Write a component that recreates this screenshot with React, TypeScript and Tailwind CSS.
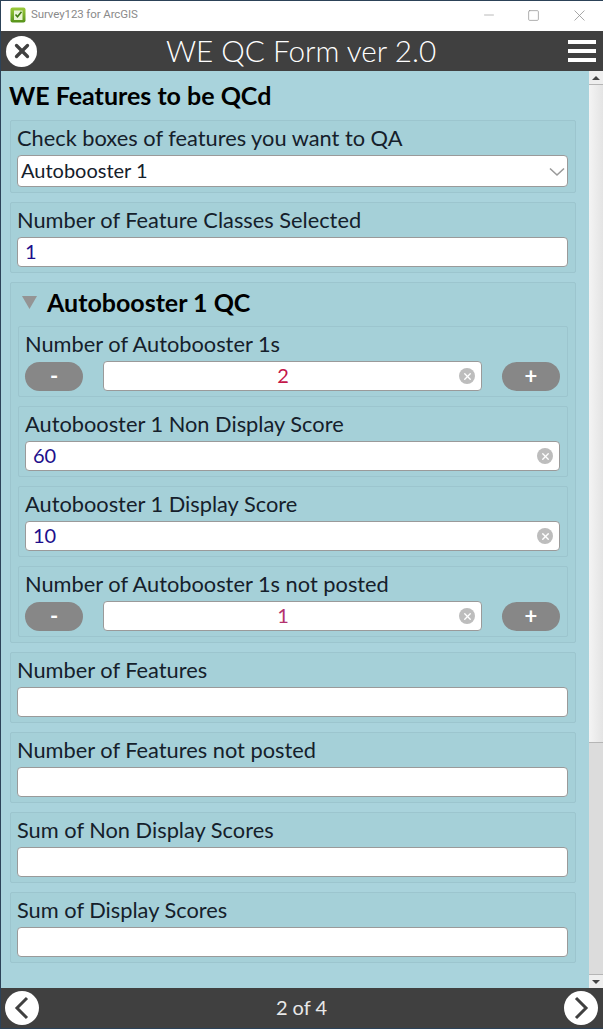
import React from 'react';
import { X, Minus, Square } from 'lucide-react';

const ClearIcon = () => (
  <span className="absolute right-[6px] top-1/2 -translate-y-1/2 flex h-4 w-4 items-center justify-center rounded-full bg-[#bdbdbd]">
    <X size={11} color="#ffffff" strokeWidth={3} />
  </span>
);

const TextBox = ({ value, color = 'text-[#1d0f8c]', center, clear }: { value?: string; color?: string; center?: boolean; clear?: boolean }) => (
  <div className={`relative flex h-[30px] min-w-0 shrink-0 grow items-center rounded-[4px] border border-[#9a9a9a] bg-white pl-[7px] pb-[3px] text-[20px] leading-none ${center ? 'justify-center pr-[26px]' : 'pr-[7px]'} ${color}`}>
    <span>{value}</span>
    {clear && <ClearIcon />}
  </div>
);

const Group = ({ label, children, tall }: { label: string; children: React.ReactNode; tall?: boolean }) => (
  <div className={`flex flex-col items-stretch rounded-[2px] border border-[#9cc5ce] bg-[#a5d0d8] pl-[6px] pr-[7px] ${tall ? 'h-[73px]' : 'h-[71px]'}`}>
    <div className="h-[34px] shrink-0 pt-[3px] text-[21.8px] leading-[28px] text-[#15202b]">{label}</div>
    <div className="flex">{children}</div>
  </div>
);

const PillButton = ({ text }: { text: string }) => (
  <div className="flex h-[29px] w-[58px] shrink-0 items-center justify-center rounded-full bg-[#878787] text-[22px] font-bold leading-none text-white">{text}</div>
);

const Stepper = ({ label, value, color }: { label: string; value: string; color: string }) => (
  <Group label={label}>
    <div className="flex w-full items-center gap-[20px]">
      <PillButton text="-" />
      <TextBox value={value} color={color} center clear />
      <PillButton text="+" />
    </div>
  </Group>
);

export default function App() {
  return (
    <div className="flex h-[1029px] w-[603px] flex-col overflow-hidden border border-r-0 border-[#2c4258] bg-white font-['Lato',sans-serif]">
      {/* window title bar */}
      <div className="flex h-[30px] shrink-0 items-center bg-white pb-[2px] pl-[9px] font-['Roboto',sans-serif] text-[11.5px] text-[#8a8a8a]">
        <svg width="16" height="16" viewBox="0 0 16 16">
          <defs>
            <linearGradient id="appIcon" x1="0" y1="0" x2="0" y2="1">
              <stop offset="0" stopColor="#9ccb3b" />
              <stop offset="1" stopColor="#55921a" />
            </linearGradient>
          </defs>
          <rect x="0.5" y="0.5" width="15" height="15" rx="2" fill="url(#appIcon)" />
          <rect x="4" y="3.5" width="8.5" height="9.5" fill="#eaf4d6" />
          <path d="M5.5 7.5l2 2.2 4-5" fill="none" stroke="#3f7a10" strokeWidth="1.6" />
        </svg>
        <span className="ml-[5px] flex-1 tracking-[-0.1px]">Survey123 for ArcGIS</span>
        <Minus size={14} color="#8f8f8f" strokeWidth={1} className="mr-[31px] scale-x-[1.1]" />
        <Square size={13} color="#8f8f8f" strokeWidth={1.3} className="mr-[32px]" />
        <X size={15} color="#8f8f8f" strokeWidth={1} className="mr-[16px] scale-125" />
      </div>

      {/* app header */}
      <div className="flex h-[40px] shrink-0 items-center justify-between bg-[#404040] pl-[5px] pr-[7px]">
        <div className="flex h-[31px] w-[31px] items-center justify-center rounded-full bg-white">
          <X size={22} color="#404040" strokeWidth={3.6} />
        </div>
        <div className="-ml-[3px] text-[29.7px] font-light leading-none text-white">WE QC Form ver 2.0</div>
        <div className="flex w-[28px] flex-col gap-[5px]">
          <div className="h-[4px] bg-white" />
          <div className="h-[4px] bg-white" />
          <div className="h-[4px] bg-white" />
        </div>
      </div>

      {/* scrolling form */}
      <div className="flex min-h-0 flex-1 bg-[#a9d3dc]">
        <div className="flex flex-1 flex-col gap-[9px] pl-[9px] pr-[13px]">
          <div className="-mb-[9px] -ml-[1px] h-[49px] pt-[10px] text-[25px] font-bold leading-[28px] text-black">WE Features to be QCd</div>

          <Group label="Check boxes of features you want to QA" tall>
            <div className="relative flex h-[32px] grow items-center rounded-[4px] border border-[#9a9a9a] bg-white px-[3px] pb-[2px] text-[20px] leading-none text-[#15202b]">
              Autobooster 1
              <svg className="absolute right-[2px] top-[11px]" width="16" height="10" viewBox="0 0 16 10">
                <path d="M1 1.5l7 6.5 7-6.5" fill="none" stroke="#9a9a9a" strokeWidth="1.6" />
              </svg>
            </div>
          </Group>

          <Group label="Number of Feature Classes Selected">
            <TextBox value="1" />
          </Group>

          <div className="flex h-[361px] flex-col rounded-[2px] border border-[#9cc5ce] bg-[#a5d0d8] pl-[7px] pr-[7px]">
            <div className="flex h-[43px] items-center pb-[5px] pl-[4px]">
              <svg width="15" height="13" viewBox="0 0 15 13">
                <path d="M0 0h15l-7.5 13z" fill="#949494" />
              </svg>
              <span className="ml-[10px] text-[25px] font-bold leading-none text-black">Autobooster 1 QC</span>
            </div>
            <div className="flex flex-col gap-[9px]">
              <Stepper label="Number of Autobooster 1s" value="2" color="text-[#c4174a]" />
              <Group label="Autobooster 1 Non Display Score">
                <TextBox value="60" clear />
              </Group>
              <Group label="Autobooster 1 Display Score">
                <TextBox value="10" clear />
              </Group>
              <Stepper label="Number of Autobooster 1s not posted" value="1" color="text-[#b4326e]" />
            </div>
          </div>

          <Group label="Number of Features"><TextBox /></Group>
          <Group label="Number of Features not posted"><TextBox /></Group>
          <Group label="Sum of Non Display Scores"><TextBox /></Group>
          <Group label="Sum of Display Scores"><TextBox /></Group>
        </div>

        {/* scrollbar */}
        <div className="flex w-[14px] shrink-0 flex-col bg-[#dcdcdc]">
          <div className="flex h-[14px] items-center justify-center border-b border-[#b5b5b5] bg-[#eeeeee]">
            <div className="h-0 w-0 border-x-[4px] border-b-[4px] border-x-transparent border-b-[#444444]" />
          </div>
          <div className="h-[658px] border-b border-[#b5b5b5] bg-gradient-to-r from-[#f4f4f4] to-[#e4e4e4]" />
          <div className="flex-1" />
          <div className="flex h-[14px] items-center justify-center border-t border-[#b5b5b5] bg-[#eeeeee]">
            <div className="h-0 w-0 border-x-[4px] border-t-[4px] border-x-transparent border-t-[#444444]" />
          </div>
        </div>
      </div>

      {/* page footer */}
      <div className="flex h-[40px] shrink-0 items-center justify-between bg-[#404040] pl-[4px] pr-[5px]">
        <div className="flex h-[34px] w-[34px] items-center justify-center rounded-full bg-white">
          <svg width="18" height="26" viewBox="0 0 18 26">
            <path d="M14 3L4 13l10 10" fill="none" stroke="#404040" strokeWidth="3" />
          </svg>
        </div>
        <div className="pb-[3px] text-[20px] leading-none text-[#e8e8e8]">2 of 4</div>
        <div className="flex h-[34px] w-[34px] items-center justify-center rounded-full bg-white">
          <svg width="18" height="26" viewBox="0 0 18 26">
            <path d="M4 3l10 10L4 23" fill="none" stroke="#404040" strokeWidth="3" />
          </svg>
        </div>
      </div>
    </div>
  );
}
